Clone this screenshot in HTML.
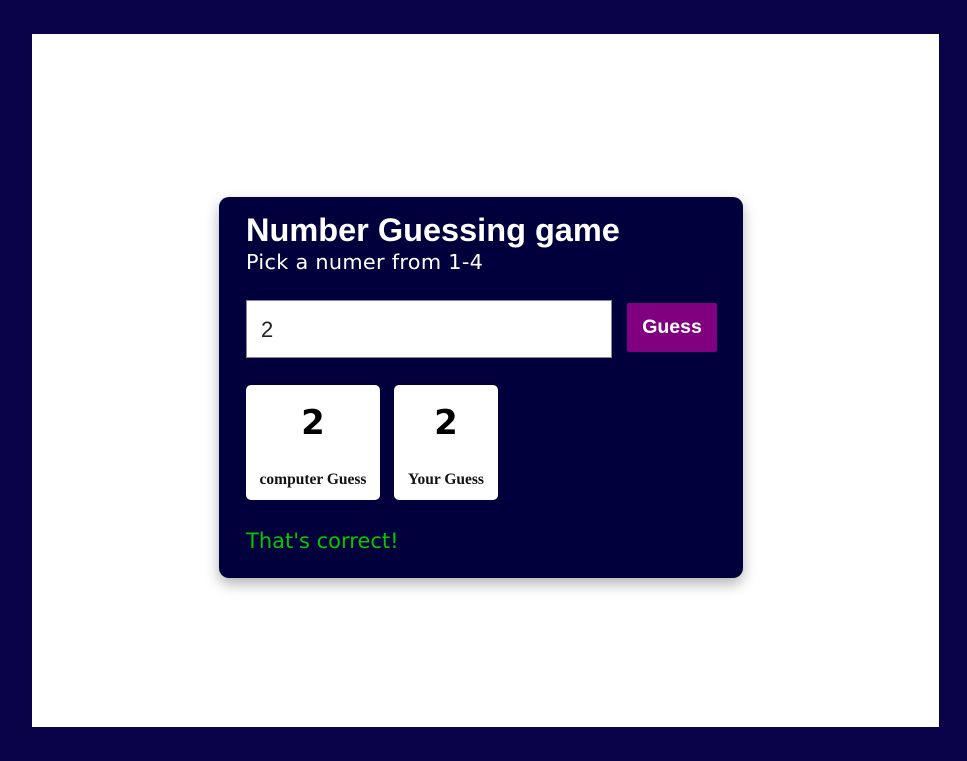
<!DOCTYPE html>
<html><head><style>
html,body{margin:0;padding:0;}
body{width:967px;height:761px;background:#0b0349;position:relative;overflow:hidden;font-family:"Liberation Sans",sans-serif;}
.white{position:absolute;left:32px;top:34px;width:907px;height:693px;background:#fff;}
.card{position:absolute;left:219px;top:197px;width:524px;height:381px;background:#01003d;border-radius:10px;box-shadow:0 6px 14px rgba(0,0,0,0.3);}
.t{position:absolute;left:27px;top:15px;color:#fff;font-weight:bold;font-size:32.5px;white-space:nowrap;}
.s{position:absolute;left:27px;top:53px;color:#fff;font-family:"DejaVu Sans",sans-serif;font-size:20.8px;letter-spacing:0.3px;white-space:nowrap;}
.in{position:absolute;left:27px;top:103px;width:364px;height:56px;background:#fff;border:1px solid #888;}
.in span{position:absolute;left:14px;top:16px;font-size:22px;color:#222;}
.btn{position:absolute;left:408px;top:106px;width:90px;height:49px;background:#800080;border-radius:2px;color:#fff;font-weight:bold;font-size:19.5px;text-align:center;line-height:49px;}
.b{position:absolute;top:188px;height:115px;background:#fff;border-radius:5px;text-align:center;}
.b .n{position:absolute;left:0;right:0;top:18px;font-family:"DejaVu Sans",sans-serif;font-weight:bold;font-size:34px;color:#000;}
.b .l{position:absolute;left:0;right:0;top:86px;font-family:"Liberation Serif",serif;font-weight:bold;font-size:15.5px;color:#111;white-space:nowrap;}
.c{position:absolute;left:27px;top:332px;color:#00c800;font-family:"DejaVu Sans",sans-serif;font-size:21px;white-space:nowrap;}
</style></head><body>
<div class="white"></div>
<div class="card">
<div class="t">Number Guessing game</div>
<div class="s">Pick a numer from 1-4</div>
<div class="in"><span>2</span></div>
<div class="btn">Guess</div>
<div class="b" style="left:27px;width:134px;"><div class="n">2</div><div class="l">computer Guess</div></div>
<div class="b" style="left:175px;width:104px;"><div class="n">2</div><div class="l">Your Guess</div></div>
<div class="c">That's correct!</div>
</div>
</body></html>
